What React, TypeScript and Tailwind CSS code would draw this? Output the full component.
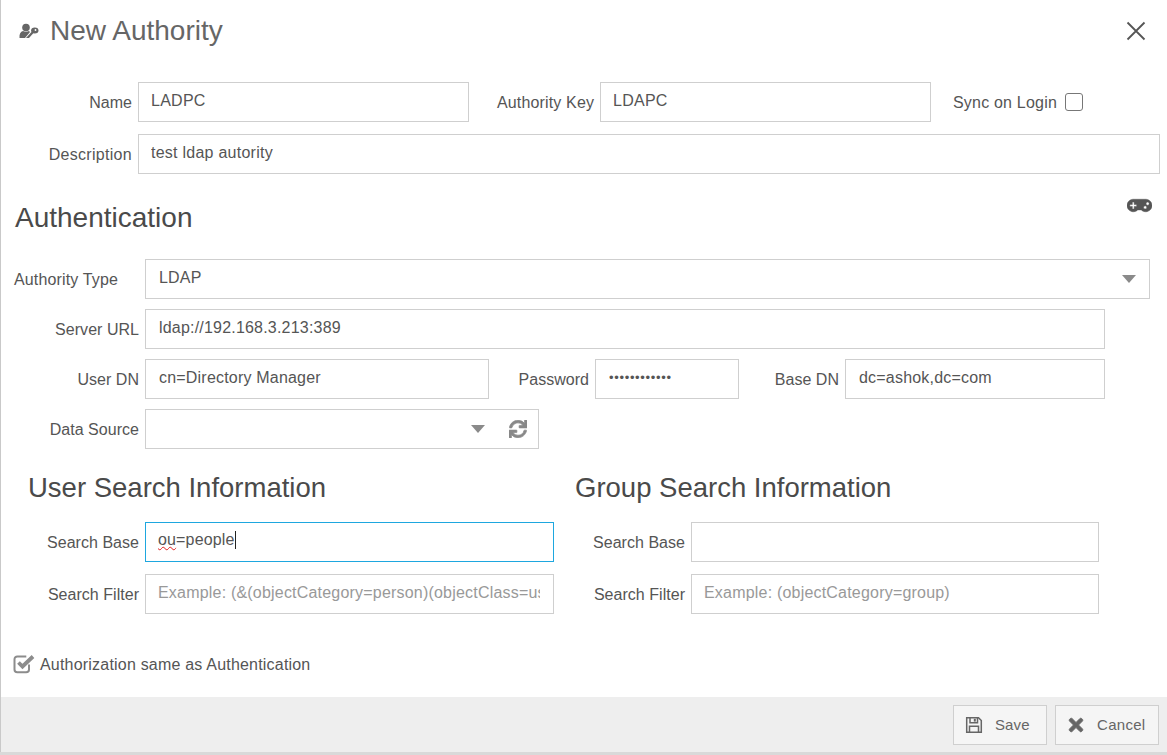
import React from "react";
import { FaGamepad, FaSync, FaTimes } from "react-icons/fa";

const inputCls =
  "h-10 border border-[#cfcfcf] bg-white pl-3 pr-[13px] pb-[3px] text-[16px] tracking-[0.25px] text-[#555] outline-none placeholder:text-[#999] min-w-0";
const inputClsB =
  "h-10 border border-[#cfcfcf] bg-white pl-[13px] pr-[13px] pb-[3px] text-[16px] tracking-[0.2px] text-[#555] outline-none placeholder:text-[#999] min-w-0";
const inputClsP =
  "h-10 border border-[#cfcfcf] bg-white pl-3 pr-[13px] pb-[3px] text-[16px] tracking-[0.2px] text-[#555] outline-none placeholder:text-[#999] min-w-0";

function Label({ w, children }: { w: string; children: React.ReactNode }) {
  return <label className={`${w} shrink-0 text-right text-[16px] tracking-[0.03px] text-[#555] pr-[6px] pt-[1px]`}>{children}</label>;
}

function Caret() {
  return (
    <svg viewBox="0 0 14 8" className="w-[14px] h-2 text-[#8a8a8a]" fill="currentColor">
      <path d="M0 0h14L7 8z" />
    </svg>
  );
}

function AuthorityIcon() {
  return (
    <svg viewBox="0 0 20 16" className="w-5 h-4 text-[#666]" fill="currentColor">
      <circle cx="7" cy="4.500" r="3.800" />
      <path d="M0.500 15c-.3-4 1-6.500 3.500-7 1.800 1 4.200 1 6 0l1 1-5 6z" />
      <path d="M7 15l4.500-5 1.500-1.500 1.500 1.500-4.500 5z" />
      <ellipse cx="15.800" cy="7.500" rx="3.700" ry="3" />
      <circle cx="16.500" cy="7" r="0.900" fill="#fff" />
    </svg>
  );
}

function SaveIcon() {
  return (
    <svg viewBox="0 0 18 18" className="w-[18px] h-[18px] text-[#666]" fill="none" stroke="currentColor" strokeWidth="1.500">
      <path d="M1.700 1.700h11.800l2.800 2.800v11.800H1.700z" />
      <path d="M5 1.700v5h7.500v-5M4.500 16.300v-6h9v6" />
      <path d="M9.800 2.800v2.800" strokeWidth="2" />
    </svg>
  );
}

function CheckedIcon() {
  return (
    <svg viewBox="0 0 22 20" className="w-[22px] h-5" fill="none">
      <path d="M16 10.500v5a2.800 2.800 0 0 1-2.800 2.800H4.300a2.800 2.800 0 0 1-2.800-2.800V5.300a2.800 2.800 0 0 1 2.800-2.800h9" stroke="#8c8c8c" strokeWidth="2" />
      <path d="M5.500 8.500l4 4L20 2.500" stroke="#8c8c8c" strokeWidth="3.800" />
    </svg>
  );
}

export default function App() {
  return (
    <div
      className="w-[1167px] h-[755px] flex flex-col bg-[#d9d9d9] overflow-hidden"
      style={{ fontFamily: '"Liberation Sans", Arial, sans-serif' }}
    >
      <div className="h-[752px] flex flex-col bg-white border-l border-[#c9c9c9]">
        <div className="flex-1 flex flex-col">
          {/* Title */}
          <div className="h-[82px] shrink-0 flex items-start justify-between pl-[18px] pr-[21px] pt-[15px]">
            <div className="flex items-center gap-[11px]">
              <AuthorityIcon />
              <h1 className="text-[28px] leading-[32px] text-[#666]">New Authority</h1>
            </div>
            <svg viewBox="0 0 20 20" className="w-[20px] h-[20px] mt-[6px] text-[#555]" fill="none" stroke="currentColor" strokeWidth="1.800">
              <path d="M1.500 1.500l17 17M18.500 1.500l-17 17" />
            </svg>
          </div>

          {/* Name row */}
          <div className="flex items-center h-10">
            <Label w="w-[137px]">Name</Label>
            <input className={`${inputCls} w-[331px]`} defaultValue="LADPC" />
            <label className="ml-[28px] w-[103px] shrink-0 text-[16px] tracking-[0.15px] text-[#555] pt-[1px]">Authority Key</label>
            <input className={`${inputCls} w-[331px]`} defaultValue="LDAPC" />
            <label className="ml-[22px] text-[16px] tracking-[0.2px] text-[#555] pt-[1px]">Sync on Login</label>
            <span className="ml-[8px] w-[18px] h-[18px] rounded-[3px] border-[1.5px] border-[#777] bg-white" />
          </div>

          {/* Description */}
          <div className="flex items-center h-10 mt-3">
            <label className="w-[137px] shrink-0 text-right text-[16px] tracking-[0.3px] text-[#555] pr-[6px] pt-[1px]">Description</label>
            <input className={`${inputCls} w-[1022px]`} defaultValue="test ldap autority" />
          </div>

          {/* Authentication heading */}
          <div className="flex items-start justify-between h-[85px] pl-[14px] pr-[15px]">
            <h2 className="text-[28px] leading-[32px] text-[#4a4a4a] mt-[28px]">Authentication</h2>
            <FaGamepad className="text-[#555] text-[25px] mt-[19px] stroke-[#555] stroke-[12]" />
          </div>

          {/* Authority type */}
          <div className="flex items-center h-10">
            <label className="w-[144px] shrink-0 pl-[13px] text-[16px] tracking-[0.15px] text-[#555] pt-[1px]">Authority Type</label>
            <div className="w-[1005px] h-10 border border-[#cfcfcf] flex items-center justify-between pl-[13px] pr-[13px] text-[16px] tracking-[0.2px] text-[#555]">
              <span className="pb-[3px]">LDAP</span>
              <Caret />
            </div>
          </div>

          {/* Server URL */}
          <div className="flex items-center h-10 mt-[10px]">
            <Label w="w-[144px]">Server URL</Label>
            <input className={`${inputClsB} w-[960px]`} defaultValue="ldap://192.168.3.213:389" />
          </div>

          {/* User DN */}
          <div className="flex items-center h-10 mt-[10px]">
            <Label w="w-[144px]">User DN</Label>
            <input className={`${inputClsB} w-[344px]`} defaultValue="cn=Directory Manager" />
            <Label w="w-[106px]">Password</Label>
            <input
              type="password"
              className="h-10 w-[144px] border border-[#cfcfcf] bg-white pl-[13px] pr-2 pb-[3px] text-[13px] tracking-[0.67px] text-[#555] outline-none"
              defaultValue="123456789012"
            />
            <Label w="w-[106px]">Base DN</Label>
            <input className={`${inputClsB} w-[260px]`} defaultValue="dc=ashok,dc=com" />
          </div>

          {/* Data Source */}
          <div className="flex items-center h-10 mt-[10px]">
            <Label w="w-[144px]">Data Source</Label>
            <div className="w-[394px] h-10 border border-[#cfcfcf] flex items-center justify-end pr-[11px] gap-[24px]">
              <Caret />
              <FaSync className="text-[#888] text-[18px] stroke-[#888] stroke-[20]" />
            </div>
          </div>

          {/* Search */}
          <div className="flex mt-[23px]">
            <div className="w-[553px] shrink-0">
              <h2 className="pl-[27px] text-[27.5px] leading-[32px] text-[#4a4a4a]">User Search Information</h2>
              <div className="flex items-center h-10 mt-[18px]">
                <Label w="w-[144px]">Search Base</Label>
                <div className="relative w-[409px] h-10 border border-[#1ea7df] pl-3 pb-[4px] flex items-center text-[16px] tracking-[0.15px] text-[#555]">
                  <span className="underline decoration-wavy decoration-[#e02020] decoration-1">ou</span>
                  <span>=people</span>
                  <span className="w-px h-[18px] bg-[#222]" />
                </div>
              </div>
              <div className="flex items-center h-10 mt-3">
                <Label w="w-[144px]">Search Filter</Label>
                <input
                  className={`${inputClsP} w-[409px]`}
                  placeholder="Example: (&(objectCategory=person)(objectClass=user)(sAMAccountName={0}))"
                />
              </div>
            </div>
            <div className="w-[546px] shrink-0">
              <h2 className="pl-[21px] text-[27.5px] leading-[32px] text-[#4a4a4a]">Group Search Information</h2>
              <div className="flex items-center h-10 mt-[18px]">
                <Label w="w-[137px]">Search Base</Label>
                <input className={`${inputClsP} w-[408px]`} />
              </div>
              <div className="flex items-center h-10 mt-3">
                <Label w="w-[137px]">Search Filter</Label>
                <input className={`${inputClsP} w-[408px]`} placeholder="Example: (objectCategory=group)" />
              </div>
            </div>
          </div>

          {/* Checkbox */}
          <div className="flex items-center gap-[5px] pl-[12px] mt-[38px] h-6">
            <CheckedIcon />
            <span className="text-[16px] tracking-[0.2px] text-[#555] pt-[1px]">Authorization same as Authentication</span>
          </div>
        </div>

        {/* Footer */}
        <div className="h-[55px] shrink-0 bg-[#eeeeee] flex items-center justify-end gap-2 pr-2">
          <button className="w-[94px] h-10 border border-[#cfcfcf] bg-[#f5f5f5] flex items-center pl-[11px] gap-[12px] text-[15px] tracking-[0.1px] text-[#666]">
            <SaveIcon />
            <span className="pt-[1px]">Save</span>
          </button>
          <button className="w-[104px] h-10 border border-[#cfcfcf] bg-[#f5f5f5] flex items-center pl-[10px] gap-[11px] text-[15px] tracking-[0.3px] text-[#666]">
            <FaTimes className="text-[#666] text-[20px] stroke-[#666] stroke-[20]" />
            <span className="pt-[1px]">Cancel</span>
          </button>
        </div>
      </div>
    </div>
  );
}
